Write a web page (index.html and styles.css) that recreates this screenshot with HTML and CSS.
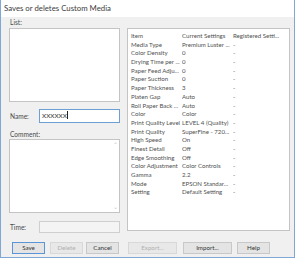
FILE: index.html
```html
<!DOCTYPE html>
<html lang="en">
<head>
  <meta charset="UTF-8">
  <title>Saves or deletes Custom Media</title>
  <link rel="stylesheet" href="styles.css">
</head>
<body>
  <div class="window">
    <div class="titlebar">Saves or deletes Custom Media</div>

    <div class="dialog">
      <div class="main">
        <div class="left">
          <div class="label list-label">List:</div>
          <div class="listbox"></div>

          <div class="field-row name-row">
            <span class="label">Name:</span>
            <div class="input focused">XXXXXX<span class="caret"></span></div>
          </div>

          <div class="label comment-label">Comment:</div>
          <div class="comment">
            <div class="scroll">
              <span class="arrow">&#8963;</span>
              <span class="arrow">&#8964;</span>
            </div>
          </div>

          <div class="field-row time-row">
            <span class="label">Time:</span>
            <div class="input disabled"></div>
          </div>
        </div>

        <div class="listview">
          <div class="row head"><span>Item</span><span>Current Settings</span><span>Registered Setti...</span></div>
          <div class="row"><span>Media Type</span><span>Premium Luster ...</span><span>-</span></div>
          <div class="row"><span>Color Density</span><span>0</span><span>-</span></div>
          <div class="row"><span>Drying Time per ...</span><span>0</span><span>-</span></div>
          <div class="row"><span>Paper Feed Adju...</span><span>0</span><span>-</span></div>
          <div class="row"><span>Paper Suction</span><span>0</span><span>-</span></div>
          <div class="row"><span>Paper Thickness</span><span>3</span><span>-</span></div>
          <div class="row"><span>Platen Gap</span><span>Auto</span><span>-</span></div>
          <div class="row"><span>Roll Paper Back ...</span><span>Auto</span><span>-</span></div>
          <div class="row"><span>Color</span><span>Color</span><span>-</span></div>
          <div class="row"><span>Print Quality Level</span><span>LEVEL 4 (Quality)</span><span>-</span></div>
          <div class="row"><span>Print Quality</span><span>SuperFine - 720...</span><span>-</span></div>
          <div class="row"><span>High Speed</span><span>On</span><span>-</span></div>
          <div class="row"><span>Finest Detail</span><span>Off</span><span>-</span></div>
          <div class="row"><span>Edge Smoothing</span><span>Off</span><span>-</span></div>
          <div class="row"><span>Color Adjustment</span><span>Color Controls</span><span>-</span></div>
          <div class="row"><span>Gamma</span><span>2.2</span><span>-</span></div>
          <div class="row"><span>Mode</span><span>EPSON Standar...</span><span>-</span></div>
          <div class="row"><span>Setting</span><span>Default Setting</span><span>-</span></div>
        </div>
      </div>

      <div class="buttons">
        <button class="btn default save">Save</button>
        <button class="btn off delete">Delete</button>
        <button class="btn cancel">Cancel</button>
        <button class="btn off export">Export...</button>
        <button class="btn import">Import...</button>
        <button class="btn help">Help</button>
      </div>
    </div>
  </div>
</body>
</html>
```

FILE: styles.css
```css
body {
  margin: 0;
  font-family: Lato, "Open Sans", sans-serif;
  background: #ffffff;
}
.window {
  width: 293px;
  height: 257px;
  border: 1px solid #7fa8d6;
  border-top: none;
  display: flex;
  flex-direction: column;
  background: #f0f0f0;
}
.titlebar {
  height: 17px;
  background: #ffffff;
  color: #3c3c3c;
  font-size: 7.8px;
  line-height: 17px;
  padding-left: 3px;
}
.dialog {
  flex: 1;
  display: flex;
  flex-direction: column;
}
.main {
  display: flex;
  padding: 0 0 0 8px;
}
.left {
  width: 111px;
  display: flex;
  flex-direction: column;
}
.label {
  font-size: 6.6px;
  color: #4a4a4a;
  padding-left: 1px;
}
.list-label {
  height: 11px;
  line-height: 10px;
}
.listbox {
  height: 72px;
  background: #fff;
  border: 1px solid #c4c4c4;
}
.field-row {
  display: flex;
  align-items: center;
}
.field-row .label {
  width: 29px;
}
.name-row {
  margin-top: 7px;
  height: 14px;
}
.input {
  flex: 1;
  height: 12px;
  border: 1px solid #c4c4c4;
  background: #fff;
  font-size: 6.4px;
  line-height: 12px;
  padding-left: 2px;
  color: #333;
}
.input.focused {
  border-color: #6d9ed4;
}
.caret {
  display: inline-block;
  width: 1px;
  height: 8px;
  background: #222;
  vertical-align: -1px;
}
.input.disabled {
  background: #f4f4f4;
  border-color: #cfcfcf;
  height: 10px;
}
.comment-label {
  margin-top: 6px;
  height: 10px;
  line-height: 10px;
}
.comment {
  height: 72px;
  background: #fff;
  border: 1px solid #c4c4c4;
  display: flex;
  justify-content: flex-end;
}
.scroll {
  width: 8px;
  display: flex;
  flex-direction: column;
  justify-content: space-between;
  align-items: center;
  padding: 2px 0;
}
.arrow {
  font-size: 6px;
  line-height: 6px;
  color: #c8c8c8;
}
.time-row {
  margin-top: 8px;
  height: 12px;
}
.listview {
  margin-left: 7px;
  width: 163px;
  height: 203px;
  margin-top: 11px;
  background: #fff;
  border: 1px solid #c4c4c4;
  padding-top: 3px;
  box-sizing: border-box;
}
.row {
  display: flex;
  height: 8.7px;
  line-height: 8.7px;
  font-size: 6.1px;
  color: #505050;
  padding-left: 3px;
  white-space: nowrap;
}
.row span {
  overflow: hidden;
}
.row span:nth-child(1) {
  width: 49px;
  margin-right: 2px;
}
.row span:nth-child(2) {
  width: 49px;
  margin-right: 2px;
}
.row span:nth-child(3) {
  width: 55px;
}
.buttons {
  display: flex;
  padding: 9px 0 0 11px;
}
.btn {
  height: 12px;
  padding: 0;
  border: 1px solid #c8c8c8;
  background: #e4e4e4;
  font-family: inherit;
  font-size: 6.2px;
  color: #333;
  line-height: 10px;
}
.btn.default {
  border-color: #5b95d6;
}
.btn.off {
  color: #b0b0b0;
  border-color: #d8d8d8;
  background: #e8e8e8;
}
.save { width: 33px; }
.delete { width: 33px; margin-left: 5px; }
.cancel { width: 33px; margin-left: 3px; }
.export { width: 49px; margin-left: 9px; }
.import { width: 49px; margin-left: 6px; }
.help { width: 33px; margin-left: 5px; }
```
